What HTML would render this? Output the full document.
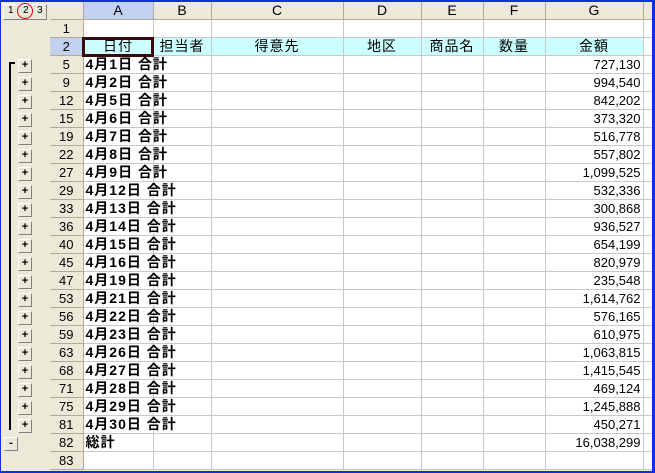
<!DOCTYPE html>
<html><head><meta charset="utf-8"><style>
body{margin:0;width:655px;height:473px;overflow:hidden;background:#ece9d8;position:relative;font-family:"Liberation Sans","Noto Sans CJK JP",sans-serif;font-size:13px}
.frame{position:absolute;left:0;top:0;width:651px;height:469px;border-top:2px solid #1030e0;border-right:3px solid #1030e0;border-bottom:2px solid #1030e0;border-left:1px solid #1030e0;pointer-events:none;z-index:9}
table{position:absolute;left:50px;top:2px;width:605px;border-collapse:collapse;table-layout:fixed;background:#fff}
td{height:17px;padding:0 2px;border-right:1px solid #c8c8c8;border-bottom:1px solid #c8c8c8;white-space:nowrap;overflow:hidden;line-height:17px}
tr.h td{background:#ece9d8;text-align:center;border-color:#b0ab98;font-size:14px}
td.r{background:#ece9d8;text-align:center;border-color:#b0ab98;color:#000}
td.a{font-weight:bold;font-size:14px;letter-spacing:1px;overflow:visible}
td.n{text-align:right}
tr.c td.k{background:#ccffff;text-align:center;font-size:14px;letter-spacing:1px}
.sel{background:#c1d1ee!important}
.btn{position:absolute;left:18px;width:12px;height:12px;background:#ece9d8;border:1px solid;border-color:#fff #808080 #808080 #fff;font:bold 11px/11px "Liberation Sans",sans-serif;text-align:center}
.lvl{position:absolute;top:5px;font-size:10px}
</style></head><body>
<div class="frame"></div>
<div style="position:absolute;left:3px;top:4px;width:42px;height:14px;border:1px solid;border-color:#fff #808080 #808080 #fff"></div>
<span class="lvl" style="left:8px">1</span><span class="lvl" style="left:23px">2</span><span class="lvl" style="left:37px">3</span>
<div style="position:absolute;left:17px;top:3px;width:14px;height:14px;border:1px solid #e00000;border-radius:50%"></div>
<div style="position:absolute;left:9px;top:62px;width:2px;height:368px;background:#000"></div>
<div style="position:absolute;left:9px;top:62px;width:6px;height:2px;background:#000"></div>
<div class="btn" style="top:59px">+</div><div class="btn" style="top:77px">+</div><div class="btn" style="top:95px">+</div><div class="btn" style="top:113px">+</div><div class="btn" style="top:131px">+</div><div class="btn" style="top:149px">+</div><div class="btn" style="top:167px">+</div><div class="btn" style="top:185px">+</div><div class="btn" style="top:203px">+</div><div class="btn" style="top:221px">+</div><div class="btn" style="top:239px">+</div><div class="btn" style="top:257px">+</div><div class="btn" style="top:275px">+</div><div class="btn" style="top:293px">+</div><div class="btn" style="top:311px">+</div><div class="btn" style="top:329px">+</div><div class="btn" style="top:347px">+</div><div class="btn" style="top:365px">+</div><div class="btn" style="top:383px">+</div><div class="btn" style="top:401px">+</div><div class="btn" style="top:419px">+</div>
<div class="btn" style="top:437px;left:4px">-</div>
<table>
<colgroup><col style="width:33px"><col style="width:70px"><col style="width:58px"><col style="width:132px"><col style="width:78px"><col style="width:62px"><col style="width:62px"><col style="width:98px"><col style="width:12px"></colgroup>
<tr class="h"><td></td><td class="sel">A</td><td>B</td><td>C</td><td>D</td><td>E</td><td>F</td><td>G</td><td></td></tr>
<tr><td class="r">1</td><td></td><td></td><td></td><td></td><td></td><td></td><td></td><td></td></tr>
<tr class="c"><td class="r sel">2</td><td class="k" style="outline:3px solid #3a0a0a;outline-offset:-2px">日付</td><td class="k">担当者</td><td class="k">得意先</td><td class="k">地区</td><td class="k">商品名</td><td class="k">数量</td><td class="k">金額</td><td></td></tr>
<tr><td class="r">5</td><td class="a">4月1日 合計</td><td></td><td></td><td></td><td></td><td></td><td class="n">727,130</td><td></td></tr>
<tr><td class="r">9</td><td class="a">4月2日 合計</td><td></td><td></td><td></td><td></td><td></td><td class="n">994,540</td><td></td></tr>
<tr><td class="r">12</td><td class="a">4月5日 合計</td><td></td><td></td><td></td><td></td><td></td><td class="n">842,202</td><td></td></tr>
<tr><td class="r">15</td><td class="a">4月6日 合計</td><td></td><td></td><td></td><td></td><td></td><td class="n">373,320</td><td></td></tr>
<tr><td class="r">19</td><td class="a">4月7日 合計</td><td></td><td></td><td></td><td></td><td></td><td class="n">516,778</td><td></td></tr>
<tr><td class="r">22</td><td class="a">4月8日 合計</td><td></td><td></td><td></td><td></td><td></td><td class="n">557,802</td><td></td></tr>
<tr><td class="r">27</td><td class="a">4月9日 合計</td><td></td><td></td><td></td><td></td><td></td><td class="n">1,099,525</td><td></td></tr>
<tr><td class="r">29</td><td class="a">4月12日 合計</td><td></td><td></td><td></td><td></td><td></td><td class="n">532,336</td><td></td></tr>
<tr><td class="r">33</td><td class="a">4月13日 合計</td><td></td><td></td><td></td><td></td><td></td><td class="n">300,868</td><td></td></tr>
<tr><td class="r">36</td><td class="a">4月14日 合計</td><td></td><td></td><td></td><td></td><td></td><td class="n">936,527</td><td></td></tr>
<tr><td class="r">40</td><td class="a">4月15日 合計</td><td></td><td></td><td></td><td></td><td></td><td class="n">654,199</td><td></td></tr>
<tr><td class="r">45</td><td class="a">4月16日 合計</td><td></td><td></td><td></td><td></td><td></td><td class="n">820,979</td><td></td></tr>
<tr><td class="r">47</td><td class="a">4月19日 合計</td><td></td><td></td><td></td><td></td><td></td><td class="n">235,548</td><td></td></tr>
<tr><td class="r">53</td><td class="a">4月21日 合計</td><td></td><td></td><td></td><td></td><td></td><td class="n">1,614,762</td><td></td></tr>
<tr><td class="r">56</td><td class="a">4月22日 合計</td><td></td><td></td><td></td><td></td><td></td><td class="n">576,165</td><td></td></tr>
<tr><td class="r">59</td><td class="a">4月23日 合計</td><td></td><td></td><td></td><td></td><td></td><td class="n">610,975</td><td></td></tr>
<tr><td class="r">63</td><td class="a">4月26日 合計</td><td></td><td></td><td></td><td></td><td></td><td class="n">1,063,815</td><td></td></tr>
<tr><td class="r">68</td><td class="a">4月27日 合計</td><td></td><td></td><td></td><td></td><td></td><td class="n">1,415,545</td><td></td></tr>
<tr><td class="r">71</td><td class="a">4月28日 合計</td><td></td><td></td><td></td><td></td><td></td><td class="n">469,124</td><td></td></tr>
<tr><td class="r">75</td><td class="a">4月29日 合計</td><td></td><td></td><td></td><td></td><td></td><td class="n">1,245,888</td><td></td></tr>
<tr><td class="r">81</td><td class="a">4月30日 合計</td><td></td><td></td><td></td><td></td><td></td><td class="n">450,271</td><td></td></tr>
<tr><td class="r">82</td><td class="a">総計</td><td></td><td></td><td></td><td></td><td></td><td class="n">16,038,299</td><td></td></tr>
<tr><td class="r">83</td><td></td><td></td><td></td><td></td><td></td><td></td><td></td><td></td></tr>
</table>
</body></html>
